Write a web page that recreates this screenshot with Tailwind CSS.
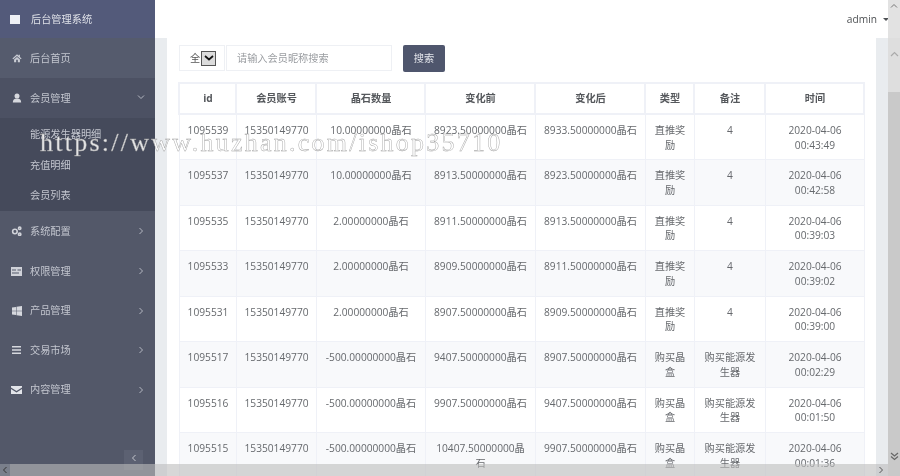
<!DOCTYPE html>
<html lang="zh"><head><meta charset="utf-8">
<script src="https://cdn.jsdelivr.net/npm/@tailwindcss/browser@4"></script>
</head>
<body class="m-0 overflow-hidden">
<div class="relative flex h-[476px] w-[900px] overflow-hidden bg-[#e9ecef] text-[10.2px] leading-[14.6px] text-[#66696d] blur-[0.3px] font-['Open_Sans','Noto_Sans_CJK_SC',sans-serif]">
  <!-- sidebar -->
  <aside class="flex h-full w-[155px] shrink-0 flex-col bg-[#535869] text-[#c3c6cf]">
    <div class="flex h-[38px] items-center gap-[11px] bg-[#535a7a] pl-[10px] text-[#dfe1e8]">
      <span class="h-[9px] w-[10px] bg-[#eef0f5]"></span><span>后台管理系统</span>
    </div>
    <div class="flex h-[40px] items-center bg-[#555b6d] pl-[12px]">
      <svg class="w-[10px] h-[10px] mr-[8px]" viewBox="0 0 24 24" fill="#c9ccd4"><path d="M12 3 1 13l2 2 9-8 9 8 2-2-4-3.600V4h-3v2.700zM5 15.500V22h5v-6h4v6h5v-6.500l-7-6.200z"/></svg><span>后台首页</span>
    </div>
    <div class="flex h-[40px] items-center justify-between bg-[#4c5163] pl-[12px] pr-[10px]">
      <span class="flex items-center"><svg class="w-[10px] h-[10px] mr-[8px]" viewBox="0 0 24 24" fill="#d6d8de"><circle cx="12" cy="7" r="6"/><path d="M2 23c0-7 3-10 10-10s10 3 10 10z"/></svg><span>会员管理</span></span>
      <svg class="mt-[-2px] h-[6px] w-[8px]" viewBox="0 0 8 6" fill="none" stroke="#b5b8c2"><path d="M1 1.500 4 4.500 7 1.500"/></svg>
    </div>
    <div class="flex h-[93px] flex-col bg-[#454a5b] pl-[30px] pt-[1px] pb-[1px]">
      <div class="flex h-[31px] items-center">能源发生器明细</div>
      <div class="flex h-[31px] items-center">充值明细</div>
      <div class="flex h-[30px] items-center">会员列表</div>
    </div>
    <div class="flex h-[40px] items-center justify-between pl-[11px] pr-[11px]">
      <span class="flex items-center"><svg class="w-[11px] h-[10px] mr-[8px]" viewBox="0 0 24 22" fill="none" stroke="#d0d2d9" stroke-width="3.500"><circle cx="8.500" cy="12" r="5"/><circle cx="19" cy="5" r="2.600"/><circle cx="19" cy="18" r="2.600"/></svg><span>系统配置</span></span>
      <svg class="h-[8px] w-[6px]" viewBox="0 0 6 8" fill="none" stroke="#b5b8c2"><path d="M1.500 1 4.500 4 1.500 7"/></svg>
    </div>
    <div class="flex h-[40px] items-center justify-between pl-[11px] pr-[11px]">
      <span class="flex items-center"><svg class="w-[11px] h-[9px] mr-[8px]" viewBox="0 0 22 18" fill="#d0d2d9"><path d="M0 0h22v18H0zM2 5v2h8V5zm0 6v2h14v-2zM13 5v2h7V5z"/></svg><span>权限管理</span></span>
      <svg class="h-[8px] w-[6px]" viewBox="0 0 6 8" fill="none" stroke="#b5b8c2"><path d="M1.500 1 4.500 4 1.500 7"/></svg>
    </div>
    <div class="flex h-[39.500px] items-center justify-between pl-[12px] pr-[11px]">
      <span class="flex items-center"><svg class="w-[10px] h-[10px] mr-[8px]" viewBox="0 0 20 20" fill="#d6d8de"><path d="M0 3l8-1.200V9.500H0zM9 1.600 20 0v9.500H9zM0 10.500h8v7.700L0 17zM9 10.500h11V20L9 18.400z"/></svg><span>产品管理</span></span>
      <svg class="h-[8px] w-[6px]" viewBox="0 0 6 8" fill="none" stroke="#b5b8c2"><path d="M1.500 1 4.500 4 1.500 7"/></svg>
    </div>
    <div class="flex h-[39.500px] items-center justify-between pl-[12px] pr-[11px]">
      <span class="flex items-center"><svg class="w-[9px] h-[8px] mr-[9px]" viewBox="0 0 18 16" fill="#d6d8de"><path d="M0 0h18v3H0zM0 6.500h18v3H0zM0 13h18v3H0z"/></svg><span>交易市场</span></span>
      <svg class="h-[8px] w-[6px]" viewBox="0 0 6 8" fill="none" stroke="#b5b8c2"><path d="M1.500 1 4.500 4 1.500 7"/></svg>
    </div>
    <div class="flex h-[39px] items-center justify-between pl-[11px] pr-[11px]">
      <span class="flex items-center"><svg class="w-[11px] h-[8px] mr-[8px]" viewBox="0 0 22 16" fill="#e2e4e9"><path d="M0 0h22v3L11 10 0 3zM0 6l11 7 11-7v10H0z"/></svg><span>内容管理</span></span>
      <svg class="h-[8px] w-[6px]" viewBox="0 0 6 8" fill="none" stroke="#b5b8c2"><path d="M1.500 1 4.500 4 1.500 7"/></svg>
    </div>
  </aside>
  <!-- main -->
  <div class="flex min-w-0 flex-1 flex-col">
    <header class="flex h-[38px] shrink-0 items-center justify-end bg-white pr-[11px] text-[#4e5154]">
      <span>admin</span>
      <span class="ml-[6px] mt-[1px] h-0 w-0 border-x-[3px] border-t-[3px] border-x-transparent border-t-[#4e5154]"></span>
    </header>
    <div class="ml-[12px] mr-[24px] flex-1 bg-white pl-[12px] pt-[7px]">
      <div class="flex h-[26px] items-center">
        <div class="flex h-[26px] w-[46px] items-center border border-[#eef0f4] pl-[10px] text-[#555]">
          <span>全</span>
          <span class="ml-[1px] flex h-[15px] w-[15px] items-center justify-center border border-[#555] bg-[#dcdcdc]"><svg class="h-[6px] w-[10px]" viewBox="0 0 10 6" fill="none" stroke="#111" stroke-width="1.700"><path d="M1 1l4 3.500L9 1"/></svg></span>
        </div>
        <div class="ml-[1px] flex h-[26px] w-[166px] items-center border border-[#eef0f4] pl-[10px] text-[#9a9da1]">请输入会员昵称搜索</div>
        <button class="ml-[11px] h-[27px] w-[42px] rounded-[2px] bg-[#4f566d] text-[#e4e6ec]">搜索</button>
      </div>
      <table class="ml-[-1px] mt-[11px] w-[685px] table-fixed border-collapse text-center">
        <colgroup><col class="w-[57px]"><col class="w-[80px]"><col class="w-[109px]"><col class="w-[110px]"><col class="w-[110px]"><col class="w-[49px]"><col class="w-[71px]"><col class="w-[99px]"></colgroup>
        <thead>
          <tr class="h-[31px] text-[#55585c] font-bold [&_th]:border-2 [&_th]:border-[#eff1f7] [&_th]:pl-[1px]">
            <th>id</th><th>会员账号</th><th>晶石数量</th><th>变化前</th><th>变化后</th><th>类型</th><th>备注</th><th>时间</th>
          </tr>
        </thead>
        <tbody class="[&_td]:h-[45.500px] [&_td]:border [&_td]:border-[#eff1f7] [&_td]:pl-[8px] [&_td]:pr-[7px] [&_td]:pt-[8px] [&_td]:align-top">
          <tr><td>1095539</td><td>15350149770</td><td>10.00000000晶石</td><td>8923.50000000晶石</td><td>8933.50000000晶石</td><td>直推奖励</td><td>4</td><td>2020-04-06 00:43:49</td></tr>
          <tr class="bg-[#f8f9fb]"><td>1095537</td><td>15350149770</td><td>10.00000000晶石</td><td>8913.50000000晶石</td><td>8923.50000000晶石</td><td>直推奖励</td><td>4</td><td>2020-04-06 00:42:58</td></tr>
          <tr><td>1095535</td><td>15350149770</td><td>2.00000000晶石</td><td>8911.50000000晶石</td><td>8913.50000000晶石</td><td>直推奖励</td><td>4</td><td>2020-04-06 00:39:03</td></tr>
          <tr class="bg-[#f8f9fb]"><td>1095533</td><td>15350149770</td><td>2.00000000晶石</td><td>8909.50000000晶石</td><td>8911.50000000晶石</td><td>直推奖励</td><td>4</td><td>2020-04-06 00:39:02</td></tr>
          <tr><td>1095531</td><td>15350149770</td><td>2.00000000晶石</td><td>8907.50000000晶石</td><td>8909.50000000晶石</td><td>直推奖励</td><td>4</td><td>2020-04-06 00:39:00</td></tr>
          <tr class="bg-[#f8f9fb]"><td>1095517</td><td>15350149770</td><td>-500.00000000晶石</td><td>9407.50000000晶石</td><td>8907.50000000晶石</td><td>购买晶盒</td><td>购买能源发生器</td><td>2020-04-06 00:02:29</td></tr>
          <tr><td>1095516</td><td>15350149770</td><td>-500.00000000晶石</td><td>9907.50000000晶石</td><td>9407.50000000晶石</td><td>购买晶盒</td><td>购买能源发生器</td><td>2020-04-06 00:01:50</td></tr>
          <tr class="bg-[#f8f9fb]"><td>1095515</td><td>15350149770</td><td>-500.00000000晶石</td><td>10407.50000000晶石</td><td>9907.50000000晶石</td><td>购买晶盒</td><td>购买能源发生器</td><td>2020-04-06 00:01:36</td></tr>
        </tbody>
      </table>
    </div>
  </div>
  <!-- collapse button -->
  <div class="absolute left-[124px] top-[450px] flex h-[20px] w-[19px] items-center justify-center bg-[#5c6172]">
    <svg class="mt-[-5px] h-[8px] w-[6px]" viewBox="0 0 6 8" fill="none" stroke="#c5c7ce"><path d="M4.500 1 1.500 4 4.500 7"/></svg>
  </div>
  <!-- watermark -->
  <div class="pointer-events-none absolute left-[40px] top-[125px] whitespace-nowrap text-[26px] leading-[36px] tracking-[2.250px] text-white/85 [-webkit-text-stroke:0.400px_#9c9c9c] font-['Liberation_Serif',serif]">https://www.huzhan.com/ishop35710</div>
  <!-- bottom scrollbar -->
  <div class="absolute bottom-0 left-0 flex h-[12px] w-[888px] items-center justify-between bg-[#bdbdbd]/60">
    <span class="flex h-full w-[10px] items-center justify-center bg-[#7a7f8b]"><svg class="h-[8px] w-[6px]" viewBox="0 0 6 8" fill="none" stroke="#333"><path d="M4.500 1 1.500 4 4.500 7"/></svg></span>
    <svg class="mr-[4px] h-[8px] w-[6px]" viewBox="0 0 6 8" fill="none" stroke="#555"><path d="M1.500 1 4.500 4 1.500 7"/></svg>
  </div>
  <!-- right scrollbar -->
  <div class="absolute right-0 top-0 flex h-full w-[12px] flex-col items-center bg-[#c9c9c9]">
    <div class="flex h-[38px] w-full justify-center bg-[#e2e2e2] pt-[3px]"><svg class="h-[6px] w-[8px]" viewBox="0 0 8 6" fill="none" stroke="#777"><path d="M1 4.500 4 1.500 7 4.500"/></svg></div>
    <div class="flex h-[54px] w-full justify-center bg-[#dedede] pt-[13px]"><svg class="h-[6px] w-[9px]" viewBox="0 0 9 6" fill="none" stroke="#aaa" stroke-width="1.200"><path d="M1 5 4.500 1.500 8 5"/></svg></div>
    <svg class="mt-auto mb-[15px] h-[9px] w-[9px]" viewBox="0 0 9 9" fill="none" stroke="#666" stroke-width="1.200"><path d="M1 1l3.500 3L8 1M1 4.500l3.500 3 3.500-3"/></svg>
  </div>
</div>
</body></html>
